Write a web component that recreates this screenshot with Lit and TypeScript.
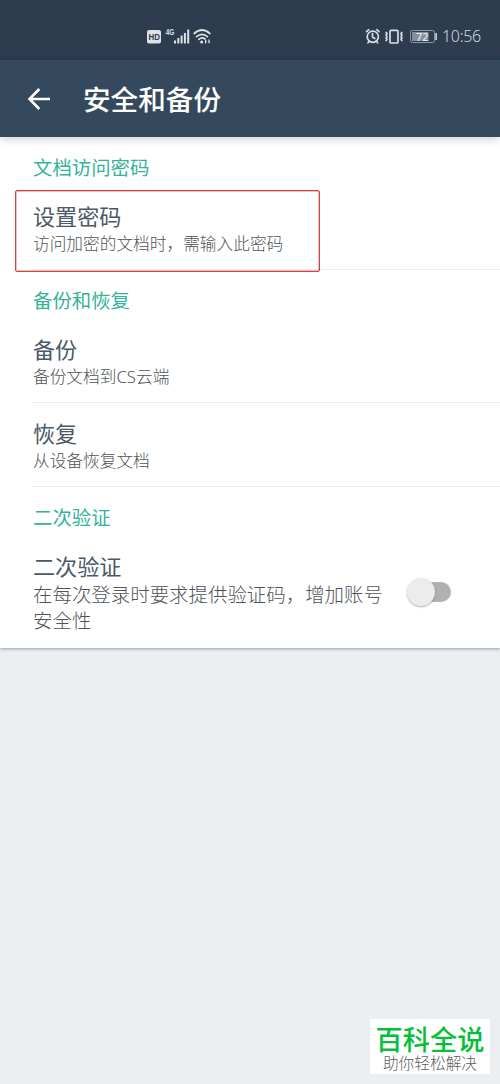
import { LitElement, html, css } from "lit";
import { customElement, property } from "lit/decorators.js";

@customElement("status-bar")
class StatusBar extends LitElement {
  static styles = css`
    :host { display: flex; align-items: center; height: 60px; padding: 12px 21px 0 147px; box-sizing: border-box; background: #2d3c4e; color: #cfd6dd; }
    svg { display: block; flex: none; }
    .right { margin-left: auto; display: flex; align-items: center; }
    .time { font: 300 16px/20px "Noto Sans", sans-serif; width: 37px; margin: 0 0 0 5px; letter-spacing: -0.3px; white-space: nowrap; }
    .num { font: 500 11px "Noto Sans", sans-serif; }
    .hd { font: 700 9px "Liberation Sans", sans-serif; }
    .net { font: 700 9px "Liberation Sans", sans-serif; }
  `;
  render() {
    return html`
      <svg width="66" height="18" viewBox="0 0 66 18" fill="none">
        <rect x="0" y="3" width="14" height="13.500" rx="2" fill="#dce2e7"></rect>
        <text class="hd" x="1.500" y="13" textLength="11.500" lengthAdjust="spacingAndGlyphs" fill="#2d3c4e">HD</text>
        <text class="net" x="18.800" y="8" textLength="8.500" lengthAdjust="spacingAndGlyphs" fill="#dce2e7">4G</text>
        <g fill="#dce2e7">
          <rect x="27" y="13.500" width="2" height="3"></rect>
          <rect x="30.300" y="11" width="2" height="5.500"></rect>
          <rect x="33.600" y="8.500" width="2" height="8"></rect>
          <rect x="36.900" y="6" width="2" height="10.500"></rect>
          <rect x="40.200" y="2.500" width="2" height="14"></rect>
        </g>
        <g stroke="#dce2e7" stroke-width="1.700" stroke-linecap="round">
          <path d="M47.200 6.500Q55 -.5 62.800 6.500"></path>
          <path d="M49.500 9.600Q55 5 60.500 9.600"></path>
          <path d="M51.800 12.400Q55 9.700 58 12"></path>
        </g>
        <circle cx="54.700" cy="15" r="1.500" fill="#dce2e7"></circle>
        <path d="M58.600 12.600l1.400 1.800h-.8v2.200h-1.200v-3.300zM61.400 12.600h1.200v2.200h.8l-1.400 1.800-1.200-1.800h.6z" fill="#dce2e7"></path>
      </svg>
      <div class="right">
        <svg width="72" height="18" viewBox="0 0 72 18" fill="none">
          <g stroke="#d8dfe4" stroke-width="1.700" stroke-linecap="round" stroke-linejoin="round">
            <circle cx="7.800" cy="9.700" r="5.600"></circle>
            <path d="M7.500 6.500v3.500l2.300 1.500M1.500 4.700l2.300-2M14.100 4.700l-2.300-2M3.800 14.800l-.8 1M11.800 14.800l.8 1"></path>
            <rect x="25" y="3.300" width="8" height="12.700" rx="1"></rect>
            <path d="M21.200 5.500l.8 1.200-1 1.400 1 1.400-1 1.400 1 1.400-.8 1.200M36.800 5.500l-.8 1.200 1 1.400-1 1.400 1 1.400-1 1.400.8 1.200"></path>
          </g>
          <rect x="45.500" y="3.500" width="24" height="12" rx="2" stroke="#8d98a2"></rect>
          <rect x="47" y="5" width="16.500" height="9" fill="#84909a"></rect>
          <text class="num" x="57.300" y="13.500" text-anchor="middle" fill="#e8ecef">72</text>
          <rect x="70.300" y="6" width="1.600" height="7" fill="#d3dae0"></rect>
        </svg>
        <div class="time">10:56</div>
      </div>`;
  }
}

@customElement("app-toolbar")
class AppToolbar extends LitElement {
  static styles = css`
    :host { display: flex; align-items: center; height: 77px; padding-left: 27px; box-sizing: border-box; background: #34495e; color: #fff; position: relative; box-shadow: 0 2px 9px rgba(0, 0, 0, 0.2); }
    svg { display: block; }
    h1 { margin: 0 0 2px 32px; font: 500 27.6px/40px "Noto Sans CJK SC", sans-serif; }
  `;
  render() {
    return html`
      <svg width="24" height="24" viewBox="0 0 24 24" fill="none" stroke="#fff" stroke-width="2.600">
        <path d="M23 12H3M12.300 2L2.500 12l9.800 10"></path>
      </svg>
      <h1>安全和备份</h1>`;
  }
}

@customElement("setting-row")
class SettingRow extends LitElement {
  static styles = css`
    :host { display: flex; align-items: flex-start; padding: 4px 47px 0 0; margin-left: 33px; box-sizing: border-box; }
    .text { flex: 1; min-width: 0; }
    .title { font-size: 22.1px; line-height: 28px; color: #4b5965; }
    .sub { margin-top: 2px; font: 300 16.7px/26px "Noto Sans", "Noto Sans CJK SC", sans-serif; color: #4f5458; white-space: pre; }
    .large { margin-top: 3px; font-size: 19.45px; }
  `;
  @property() heading = "";
  @property() summary = "";
  @property({ type: Boolean }) large = false;
  render() {
    return html`
      <div class="text">
        <div class="title">${this.heading}</div>
        <div class="sub ${this.large ? "large" : ""}">${this.summary}</div>
      </div>
      <slot></slot>`;
  }
}

@customElement("toggle-switch")
class ToggleSwitch extends LitElement {
  static styles = css`
    :host { display: flex; align-items: center; align-self: center; width: 46px; height: 30px; flex: none; }
    .track { width: 37px; height: 20px; margin-left: 7px; border-radius: 10px; background: #b1b1b1; display: flex; align-items: center; }
    .thumb { flex: none; width: 28px; height: 28px; margin-left: -7px; border-radius: 50%; background: #ececec; box-shadow: 0 1px 2px rgba(0, 0, 0, 0.3); }
  `;
  render() {
    return html`<div class="track"><div class="thumb"></div></div>`;
  }
}

@customElement("app-root")
class AppRoot extends LitElement {
  static styles = css`
    :host { display: block; position: relative; height: 1084px; overflow: hidden; background: #ebeff2; font-family: "Noto Sans CJK SC", sans-serif; }
    .panel { height: 511px; background: #fff; box-shadow: 0 1px 3px rgba(0, 0, 0, 0.35); }
    .section { height: 60px; padding-left: 33px; font-size: 19.4px; line-height: 59px; color: #35b39b; }
    .row { height: 73px; }
    .ruled { border-bottom: 1px solid #ebeced; }
    .second { height: 84px; padding-top: 15px; }
    .double { height: 102px; padding-bottom: 16px; }
    .frame { position: absolute; left: 15px; top: 190px; width: 305px; height: 82px; box-sizing: border-box; border: 1.5px solid #d4423f; border-radius: 2px; box-shadow: inset 0 0 0 0.5px #df7a76; }
    .mark { position: absolute; left: 370px; top: 1019px; width: 120px; height: 55px; background: #fff; text-align: center; white-space: nowrap; overflow: hidden; }
    .brand { font-size: 27.2px; font-weight: 500; line-height: 32px; padding-top: 3px; color: #06bf38; }
    .motto { font: 300 15.7px/18px "Noto Sans CJK SC", sans-serif; color: #606060; }
  `;
  render() {
    return html`
      <status-bar></status-bar>
      <app-toolbar></app-toolbar>
      <main class="panel">
        <div class="section">文档访问密码</div>
        <setting-row class="row ruled" heading="设置密码" summary="访问加密的文档时，需输入此密码"></setting-row>
        <div class="section">备份和恢复</div>
        <setting-row class="row ruled" heading="备份" summary="备份文档到CS云端"></setting-row>
        <setting-row class="second ruled" heading="恢复" summary="从设备恢复文档"></setting-row>
        <div class="section">二次验证</div>
        <setting-row class="double" large heading="二次验证" summary=${"在每次登录时要求提供验证码，增加账号\n安全性"}>
          <toggle-switch></toggle-switch>
        </setting-row>
      </main>
      <div class="frame"></div>
      <div class="mark"><div class="brand">百科全说</div><div class="motto">助你轻松解决</div></div>`;
  }
}
